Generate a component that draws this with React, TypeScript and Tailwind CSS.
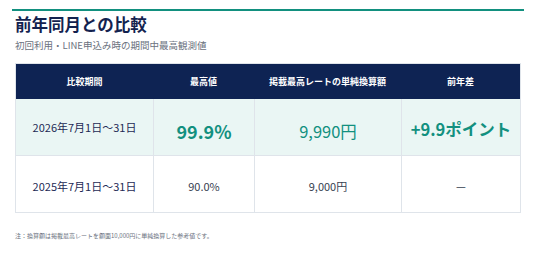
const FONT = { fontFamily: '"Noto Sans CJK JP", "Noto Sans", sans-serif' };

const HEADERS = ["比較期間", "最高値", "掲載最高レートの単純換算額", "前年差"];

export default function App() {
  return (
    <div className="h-[255px] w-[536px] bg-white px-[12px] pt-[9px]" style={FONT}>
      <div className="border-t-2 border-[#12907f] px-[3px]">
        <h1 className="mt-[5px] text-[16.5px] font-bold leading-[17px] text-[#13224f]">
          前年同月との比較
        </h1>
        <p className="mt-[6px] text-[9.5px] leading-[12px] text-[#6b7280]">
          初回利用・LINE申込み時の期間中最高観測値
        </p>

        <div className="mt-[12px] border border-[#dfe4ea]">
          <div className="grid h-[35px] grid-cols-[137px_101px_147px_1fr] bg-[#0e2353] text-[9px] font-bold text-white">
            {HEADERS.map((h) => (
              <div key={h} className="flex items-center justify-center">
                {h}
              </div>
            ))}
          </div>

          <div className="grid h-[57px] grid-cols-[137px_101px_147px_1fr] border-b border-[#dfe4ea] bg-[#eaf6f4]">
            <div className="flex items-center justify-center pt-[1px] text-[11px] text-[#1d2a55]">
              2026年7月1日〜31日
            </div>
            <div className="flex items-center justify-center border-l border-[#dfe4ea] pt-[8px] text-[18px] font-bold text-[#12907f]">
              99.9%
            </div>
            <div className="flex items-center justify-center border-l border-[#dfe4ea] pt-[8px] text-[16.5px] text-[#12907f]">
              9,990円
            </div>
            <div className="flex items-center justify-center border-l border-[#dfe4ea] pt-[5px] text-[16.5px] font-bold text-[#12907f]">
              +9.9ポイント
            </div>
          </div>

          <div className="grid h-[56px] grid-cols-[137px_101px_147px_1fr] text-[11px]">
            <div className="flex items-center justify-center pt-[4px] text-[#1d2a55]">
              2025年7月1日〜31日
            </div>
            <div className="flex items-center justify-center border-l border-[#dfe4ea] pt-[5px] text-[#374151]">
              90.0%
            </div>
            <div className="flex items-center justify-center border-l border-[#dfe4ea] pt-[4px] text-[#374151]">
              9,000円
            </div>
            <div className="flex items-center justify-center border-l border-[#dfe4ea] pt-[5px] text-[#374151]">
              —
            </div>
          </div>
        </div>

        <p className="mt-[19px] text-[6px] leading-[8px] text-[#6b7280]">
          注：換算額は掲載最高レートを額面10,000円に単純換算した参考値です。
        </p>
      </div>
    </div>
  );
}
